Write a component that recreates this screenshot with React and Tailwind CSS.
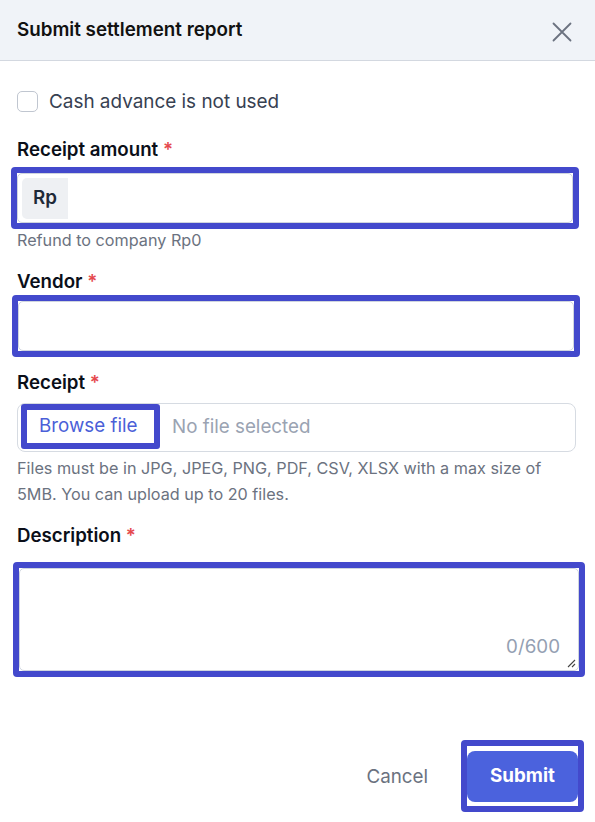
import React from "react";

export default function App() {
  return (
    <div className="w-[595px] h-[822px] bg-white font-['Inter',sans-serif] text-[#111827] overflow-hidden">
      {/* Header */}
      <div className="h-[61px] bg-[#f0f3f8] border-b border-[#d3d8e0] flex items-center justify-between pl-[17px] pr-[23px]">
        <div className="text-[18.8px] font-semibold leading-[24px] text-[#111] -mt-[1px]">Submit settlement report</div>
        <svg width="20" height="20" viewBox="0 0 20 20" className="mt-[3px]">
          <path d="M1.5 1.5 L18.5 18.5 M18.5 1.5 L1.5 18.5" stroke="#6b7280" strokeWidth="1.8" strokeLinecap="round" />
        </svg>
      </div>

      <div className="px-[17px]">
        {/* Checkbox */}
        <div className="mt-[30px] flex items-center gap-[11px] h-[21px]">
          <div className="w-[21px] h-[21px] rounded-[5px] border-[1.5px] border-[#c0c6d0] bg-white" />
          <span className="text-[18.9px] leading-[24px] text-[#374151]">Cash advance is not used</span>
        </div>

        {/* Receipt amount */}
        <div className="mt-[26px] text-[18.7px] font-semibold leading-[24px] text-[#0b0f19]">
          Receipt amount <span className="text-[#e5484d]">*</span>
        </div>
        <div className="mt-[5px] -ml-[6px] w-[568px] h-[62px] border-[6px] border-[#4349cc] rounded-[4px] bg-white">
          <div className="h-full w-full border border-[#cfd5de] rounded-[5px] flex items-center pl-[4px]">
            <div className="w-[46px] h-[41px] bg-[#eef0f3] rounded-l-[5px] flex items-center justify-center text-[18.8px] font-semibold text-[#1f2937]">
              Rp
            </div>
          </div>
        </div>
        <div className="mt-[1px] text-[16.2px] leading-[20px] text-[#6b7280]">Refund to company Rp0</div>

        {/* Vendor */}
        <div className="mt-[20px] text-[18.7px] font-semibold leading-[24px] text-[#0b0f19]">
          Vendor <span className="text-[#e5484d]">*</span>
        </div>
        <div className="mt-[1px] -ml-[5px] w-[568px] h-[62px] border-[6px] border-[#4349cc] rounded-[4px] bg-white">
          <div className="h-full w-full border border-[#cfd5de] rounded-[5px]" />
        </div>

        {/* Receipt */}
        <div className="mt-[14px] text-[18.7px] font-semibold leading-[24px] text-[#0b0f19]">
          Receipt <span className="text-[#e5484d]">*</span>
        </div>
        <div className="mt-[8px] w-[559px] h-[49px] border border-[#d6dbe2] rounded-[8px] flex items-center pl-[3px]">
          <div className="h-[45px] w-[139px] border-[6px] border-[#4349cc] rounded-[3px] flex items-center pl-[12px] text-[18.8px] text-[#4b5fd8] -mt-[2px]">
            Browse file
          </div>
          <span className="ml-[12px] text-[18.8px] text-[#9aa3b2]">No file selected</span>
        </div>
        <div className="mt-[3px] text-[16.2px] leading-[26px] text-[#6b7280]">
          Files must be in JPG, JPEG, PNG, PDF, CSV, XLSX with a max size of
          <br />
          5MB. You can upload up to 20 files.
        </div>

        {/* Description */}
        <div className="mt-[17px] text-[18.7px] font-semibold leading-[24px] text-[#0b0f19]">
          Description <span className="text-[#e5484d]">*</span>
        </div>
        <div className="mt-[14px] -ml-[4px] w-[572px] h-[115px] border-[6px] border-[#4349cc] rounded-[4px] bg-white">
          <div className="relative h-full w-full border border-[#cfd5de] rounded-[5px] flex items-end justify-end pr-[18px] pb-[12px]">
            <span className="text-[18.8px] leading-[22px] text-[#94a0b2]">0/600</span>
            <svg width="9" height="9" viewBox="0 0 9 9" className="absolute right-[2px] bottom-[2px]">
              <path d="M1 8 L8 1 M5 8 L8 5" stroke="#444" strokeWidth="1.1" />
            </svg>
          </div>
        </div>

        {/* Footer */}
        <div className="mt-[63px] flex items-center justify-end -mr-[6px]">
          <span className="text-[18.8px] text-[#6b7280] mr-[33px] mt-[2px]">Cancel</span>
          <div className="w-[123px] h-[72px] border-[6px] border-[#4349cc] rounded-[4px] bg-white flex items-center">
            <div className="w-full h-[51px] mt-[1px] bg-[#4b62dd] rounded-[8px] flex items-center justify-center text-white text-[18.8px] font-bold">
              Submit
            </div>
          </div>
        </div>
      </div>
    </div>
  );
}
